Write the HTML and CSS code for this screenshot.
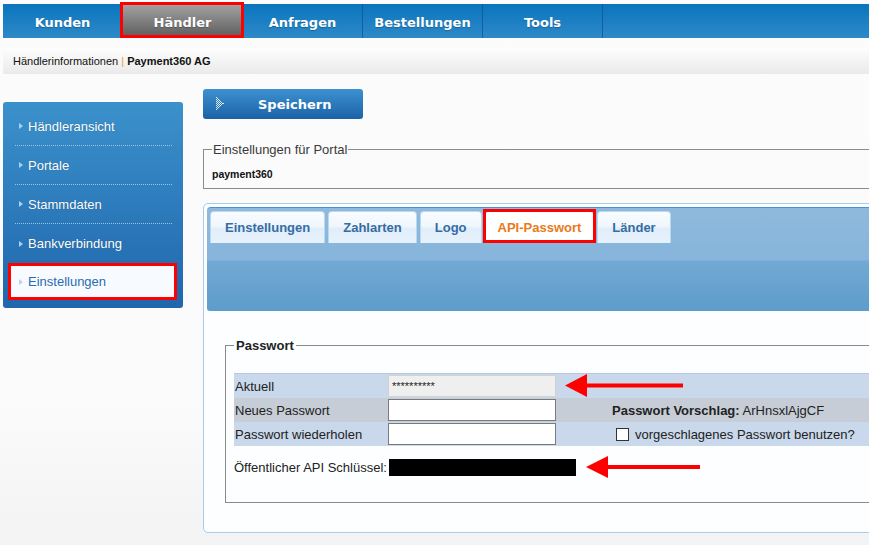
FILE: index.html
```html
<!DOCTYPE html>
<html lang="de">
<head>
	<meta charset="UTF-8">
	<meta name="viewport" content="width=device-width, initial-scale=1.0">
	<title>Händlerinformationen | Payment360 AG</title>
	<link rel="stylesheet" href="styles.css">
</head>
<body>
	<div class="topnav">
		<a href="#" class="nav-item">Kunden</a>
		<a href="#" class="nav-item active">Händler</a>
		<a href="#" class="nav-item">Anfragen</a>
		<a href="#" class="nav-item">Bestellungen</a>
		<a href="#" class="nav-item">Tools</a>
	</div>

	<div class="breadcrumb">Händlerinformationen <span class="sep">|</span> <b>Payment360 AG</b></div>

	<div class="page">
		<ul class="sidebar">
			<li>Händleransicht</li>
			<li>Portale</li>
			<li>Stammdaten</li>
			<li>Bankverbindung</li>
			<li class="active">Einstellungen</li>
		</ul>

		<div class="main">
			<button class="save">
				<svg width="10" height="14" viewBox="0 0 10 14" fill="#dcecff">
					<rect x="0" y="0" width="1" height="1"/><rect x="0" y="2" width="1" height="1"/><rect x="0" y="4" width="1" height="1"/><rect x="0" y="6" width="1" height="1"/><rect x="0" y="8" width="1" height="1"/><rect x="0" y="10" width="1" height="1"/><rect x="0" y="12" width="1" height="1"/>
					<rect x="1" y="1" width="1" height="1"/><rect x="1" y="3" width="1" height="1"/><rect x="1" y="5" width="1" height="1"/><rect x="1" y="7" width="1" height="1"/><rect x="1" y="9" width="1" height="1"/><rect x="1" y="11" width="1" height="1"/>
					<rect x="2" y="2" width="1" height="1"/><rect x="2" y="4" width="1" height="1"/><rect x="2" y="6" width="1" height="1"/><rect x="2" y="8" width="1" height="1"/><rect x="2" y="10" width="1" height="1"/>
					<rect x="3" y="3" width="1" height="1"/><rect x="3" y="5" width="1" height="1"/><rect x="3" y="7" width="1" height="1"/><rect x="3" y="9" width="1" height="1"/>
					<rect x="4" y="4" width="1" height="1"/><rect x="4" y="6" width="1" height="1"/><rect x="4" y="8" width="1" height="1"/>
					<rect x="5" y="5" width="1" height="1"/><rect x="5" y="7" width="1" height="1"/>
					<rect x="6" y="6" width="1" height="1"/><rect x="7" y="6" width="1" height="1"/>
				</svg>
				<span>Speichern</span>
			</button>

			<fieldset class="portal">
				<legend>Einstellungen für Portal</legend>
				<div class="portal-name">payment360</div>
			</fieldset>

			<div class="panel">
				<div class="tabbar">
					<div class="tab">Einstellungen</div>
					<div class="tab">Zahlarten</div>
					<div class="tab">Logo</div>
					<div class="tab active">API-Passwort</div>
					<div class="tab">Länder</div>
				</div>

				<div class="panel-body">
					<fieldset class="pw">
						<legend>Passwort</legend>
						<div class="pw-row first">
							<label>Aktuell</label>
							<input class="readonly" type="text" value="**********" readonly>
							<svg class="arrow-1" width="118" height="24" viewBox="0 0 118 24">
								<polygon points="0,11.5 22,0 22,23" fill="#f00"/>
								<rect x="20" y="9.5" width="98" height="4" fill="#f00"/>
							</svg>
						</div>
						<div class="pw-row gray">
							<label>Neues Passwort</label>
							<input type="password">
							<span class="suggest"><b>Passwort Vorschlag:</b> ArHnsxlAjgCF</span>
						</div>
						<div class="pw-row">
							<label>Passwort wiederholen</label>
							<input type="password">
							<input type="checkbox" class="check">
							<span>vorgeschlagenes Passwort benutzen?</span>
						</div>

						<div class="api-row">
							Öffentlicher API Schlüssel:<span class="redacted"></span>
							<svg class="arrow-2" width="114" height="22" viewBox="0 0 114 22">
								<polygon points="0,11 22,0 22,22" fill="#f00"/>
								<rect x="20" y="9" width="94" height="4" fill="#f00"/>
							</svg>
						</div>
					</fieldset>
				</div>
			</div>
		</div>
	</div>
</body>
</html>
```

FILE: styles.css
```css
html {
	overflow: hidden;
}
body {
	margin: 0;
	font-family: "Liberation Sans", Arial, sans-serif;
	font-size: 13px;
	color: #222;
	background: linear-gradient(#fcfcfc, #fafafa 420px, #f3f3f3);
	min-height: 545px;
}

/* top navigation */
.topnav {
	display: flex;
	height: 34px;
	margin: 4px 0 0 3px;
	background: linear-gradient(#0a75bd, #2e89c8);
}
.nav-item {
	position: relative;
	width: 120px;
	box-sizing: border-box;
	padding-top: 3px;
	border-right: 1px solid rgba(16, 80, 140, 0.7);
	text-align: center;
	line-height: 31px;
	font-family: "DejaVu Sans", Verdana, sans-serif;
	font-size: 13px;
	font-weight: bold;
	color: #fff;
	text-decoration: none;
	text-shadow: 0 1px 1px rgba(0, 0, 0, 0.25);
}
.nav-item.active {
	background: linear-gradient(#a3a3a3, #5b5b5b);
}
.nav-item.active::after {
	content: "";
	position: absolute;
	top: -2px;
	bottom: 0;
	left: -3px;
	right: -2px;
	border: 3px solid #f00;
}

.breadcrumb {
	height: 26px;
	line-height: 26px;
	margin: 10px 0 0 3px;
	padding-left: 10px;
	font-size: 11px;
	color: #111;
	background: linear-gradient(#fdfdfd, #eaeaea);
}
.breadcrumb .sep {
	color: #e8a040;
}

/* page */
.page {
	display: flex;
	align-items: flex-start;
	gap: 20px;
	margin-top: 15px;
	padding-left: 3px;
}

.sidebar {
	width: 180px;
	flex-shrink: 0;
	margin: 13px 0 0;
	padding: 5px 0 8px;
	list-style: none;
	border-radius: 3px;
	background: linear-gradient(#3b91cb, #2066ad);
}
.sidebar li {
	display: flex;
	align-items: center;
	height: 39px;
	box-sizing: border-box;
	margin: 0 11px 0 12px;
	padding-left: 4px;
	border-bottom: 1px dotted #93c8ee;
	color: #fff;
	text-shadow: 0 0 1px rgba(0, 0, 0, 0.3);
}
.sidebar li::before {
	content: "";
	border-left: 4px solid #a4d2f3;
	border-top: 3px solid transparent;
	border-bottom: 3px solid transparent;
	margin-right: 5px;
}
.sidebar li:nth-child(4) {
	border-bottom: none;
}
.sidebar li.active {
	height: 37px;
	margin: 0 6px 0 5px;
	padding-left: 8px;
	border: 3px solid #f00;
	background: #f7fbff;
	color: #2a6bb0;
	text-shadow: none;
}
.sidebar li.active::before {
	border-left-color: #b6d6ef;
}

.main {
	width: 720px;
	flex-shrink: 0;
}

.save {
	display: flex;
	align-items: center;
	width: 160px;
	height: 30px;
	padding: 0 0 0 13px;
	border: 0;
	border-radius: 3px;
	background: linear-gradient(#3d91d1, #1b62a6);
	color: #fff;
	font-family: "DejaVu Sans", Verdana, sans-serif;
	font-size: 13px;
	font-weight: bold;
}
.save span {
	margin-left: 32px;
}

fieldset {
	margin: 0;
	border: 1px solid #8a8a8a;
	min-width: 0;
}
legend {
	padding: 0 2px;
	line-height: 15px;
}

.portal {
	margin-top: 23px;
	padding: 10px 8px 7px;
}
.portal legend {
	padding: 0 1px;
	color: #3a3a3a;
}
.portal-name {
	font-size: 10.5px;
	font-weight: bold;
	line-height: 14px;
	color: #111;
}

/* tab panel */
.panel {
	margin-top: 14px;
	padding: 3px;
	border: 1px solid #a9cbe6;
	border-radius: 5px;
	background: #fcfeff;
}
.tabbar {
	display: flex;
	gap: 3px;
	height: 100px;
	padding: 3px 3px 0;
	border-top: 1px solid #4a92d3;
	border-radius: 4px 4px 3px 3px;
	background: linear-gradient(#8fbade, #86b4da 52px, #73a9d4 53px, #5d9ccb);
}
.tab {
	position: relative;
	height: 32px;
	box-sizing: border-box;
	padding: 0 14px;
	line-height: 31px;
	border: 1px solid #bcd8ef;
	border-bottom: none;
	border-radius: 4px 4px 0 0;
	background: linear-gradient(#f9fcff, #eef6fd 48%, #e1eefa 52%, #e6f1fb);
	color: #356ca4;
	font-weight: bold;
}
.tab.active {
	padding: 0 12px;
	background: #fff;
	color: #e97a1c;
}
.tab.active::after {
	content: "";
	position: absolute;
	top: -3px;
	bottom: 0;
	left: -3px;
	right: -3px;
	border: 3px solid #f00;
}

.panel-body {
	padding: 27px 0 26px 18px;
}
.pw {
	padding: 20px 0 24px 8px;
}
.pw legend {
	font-weight: bold;
}

.pw-row {
	display: flex;
	align-items: center;
	height: 24px;
	background: #c9d8eb;
}
.pw-row.first {
	height: 25px;
	box-sizing: border-box;
	border-top: 1px solid #b6c8de;
}
.pw-row.gray {
	background: #c6cdd6;
}
.pw-row label {
	width: 153px;
	padding-left: 1px;
}
.pw-row input[type="text"],
.pw-row input[type="password"] {
	width: 168px;
	height: 22px;
	box-sizing: border-box;
	margin: 0;
	padding: 0 3px;
	border: 1px solid #7a7a7a;
	background: #fff;
	font-family: "Liberation Sans", Arial, sans-serif;
	font-size: 11px;
	color: #222;
}
.pw-row input.readonly {
	border-color: #d2d2d2;
	background: #efefef;
}
.arrow-1 {
	margin-left: 9px;
}
.suggest {
	margin-left: 56px;
}
.check {
	appearance: none;
	width: 13px;
	height: 13px;
	margin: 0 6px 0 60px;
	border: 1px solid #333;
	background: #fff;
}

.api-row {
	display: flex;
	align-items: center;
	height: 22px;
	margin-top: 10px;
}
.redacted {
	width: 187px;
	height: 17px;
	margin-left: 2px;
	background: #000;
}
.arrow-2 {
	margin-left: 10px;
}
```
